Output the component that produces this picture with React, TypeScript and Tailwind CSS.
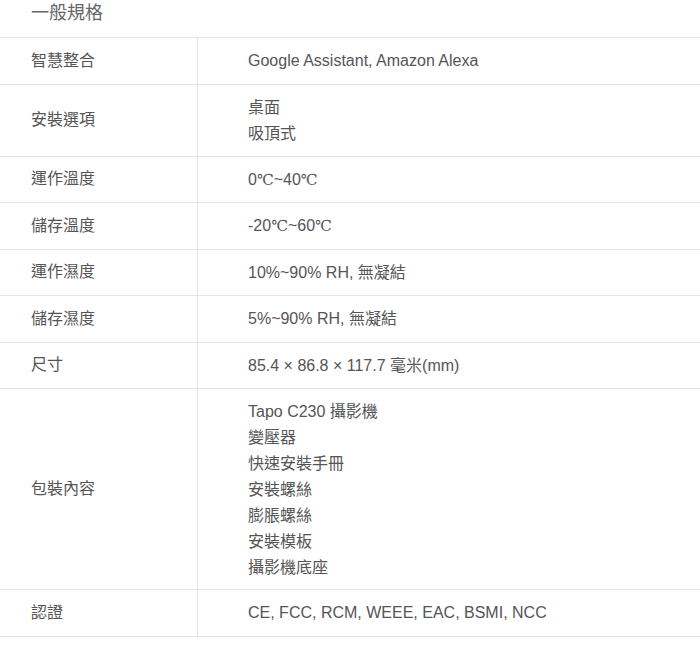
import React from "react";

const rows: { label: string; values: string[]; pb: string }[] = [
  { label: "智慧整合", values: ["Google Assistant, Amazon Alexa"], pb: "pb-[9.5px]" },
  { label: "安裝選項", values: ["桌面", "吸頂式"], pb: "pb-[9px]" },
  { label: "運作溫度", values: ["0℃~40℃"], pb: "pb-[9.5px]" },
  { label: "儲存溫度", values: ["-20℃~60℃"], pb: "pb-[9.5px]" },
  { label: "運作濕度", values: ["10%~90% RH, 無凝結"], pb: "pb-[9.5px]" },
  { label: "儲存濕度", values: ["5%~90% RH, 無凝結"], pb: "pb-[9.5px]" },
  { label: "尺寸", values: ["85.4 × 86.8 × 117.7 毫米(mm)"], pb: "pb-[9.5px]" },
  {
    label: "包裝內容",
    values: ["Tapo C230 攝影機", "變壓器", "快速安裝手冊", "安裝螺絲", "膨脹螺絲", "安裝模板", "攝影機底座"],
    pb: "pb-[8px]",
  },
  { label: "認證", values: ["CE, FCC, RCM, WEEE, EAC, BSMI, NCC"], pb: "pb-[9.5px]" },
];

function Value({ text }: { text: string }) {
  const parts = text.split("℃");
  return (
    <div>
      {parts.map((p, i) => (
        <React.Fragment key={i}>
          {p}
          {i < parts.length - 1 && (
            <span style={{ fontFamily: '"DejaVu Serif", "Liberation Serif", serif' }} className="text-[15px]">
              ℃
            </span>
          )}
        </React.Fragment>
      ))}
    </div>
  );
}

export default function App() {
  return (
    <div
      className="w-[700px] h-[648px] bg-white overflow-hidden text-[#555555]"
      style={{ fontFamily: '"Liberation Sans", Arial, "Noto Sans CJK TC", sans-serif' }}
    >
      <div className="h-[38px] pl-[31px] pt-[1px] text-[18px] leading-[24px] text-[#666666] border-b border-[#e5e5e5]">
        一般規格
      </div>
      {rows.map((r) => (
        <div key={r.label} className="flex border-b border-[#e5e5e5]">
          <div className="w-[198px] shrink-0 border-r border-[#e5e5e5] pl-[31px] flex items-center text-[16px] leading-[26px]">
            {r.label}
          </div>
          <div className={`flex-1 pl-[50px] pt-[10px] ${r.pb} text-[16px] leading-[26px]`}>
            {r.values.map((v) => (
              <Value key={v} text={v} />
            ))}
          </div>
        </div>
      ))}
    </div>
  );
}
